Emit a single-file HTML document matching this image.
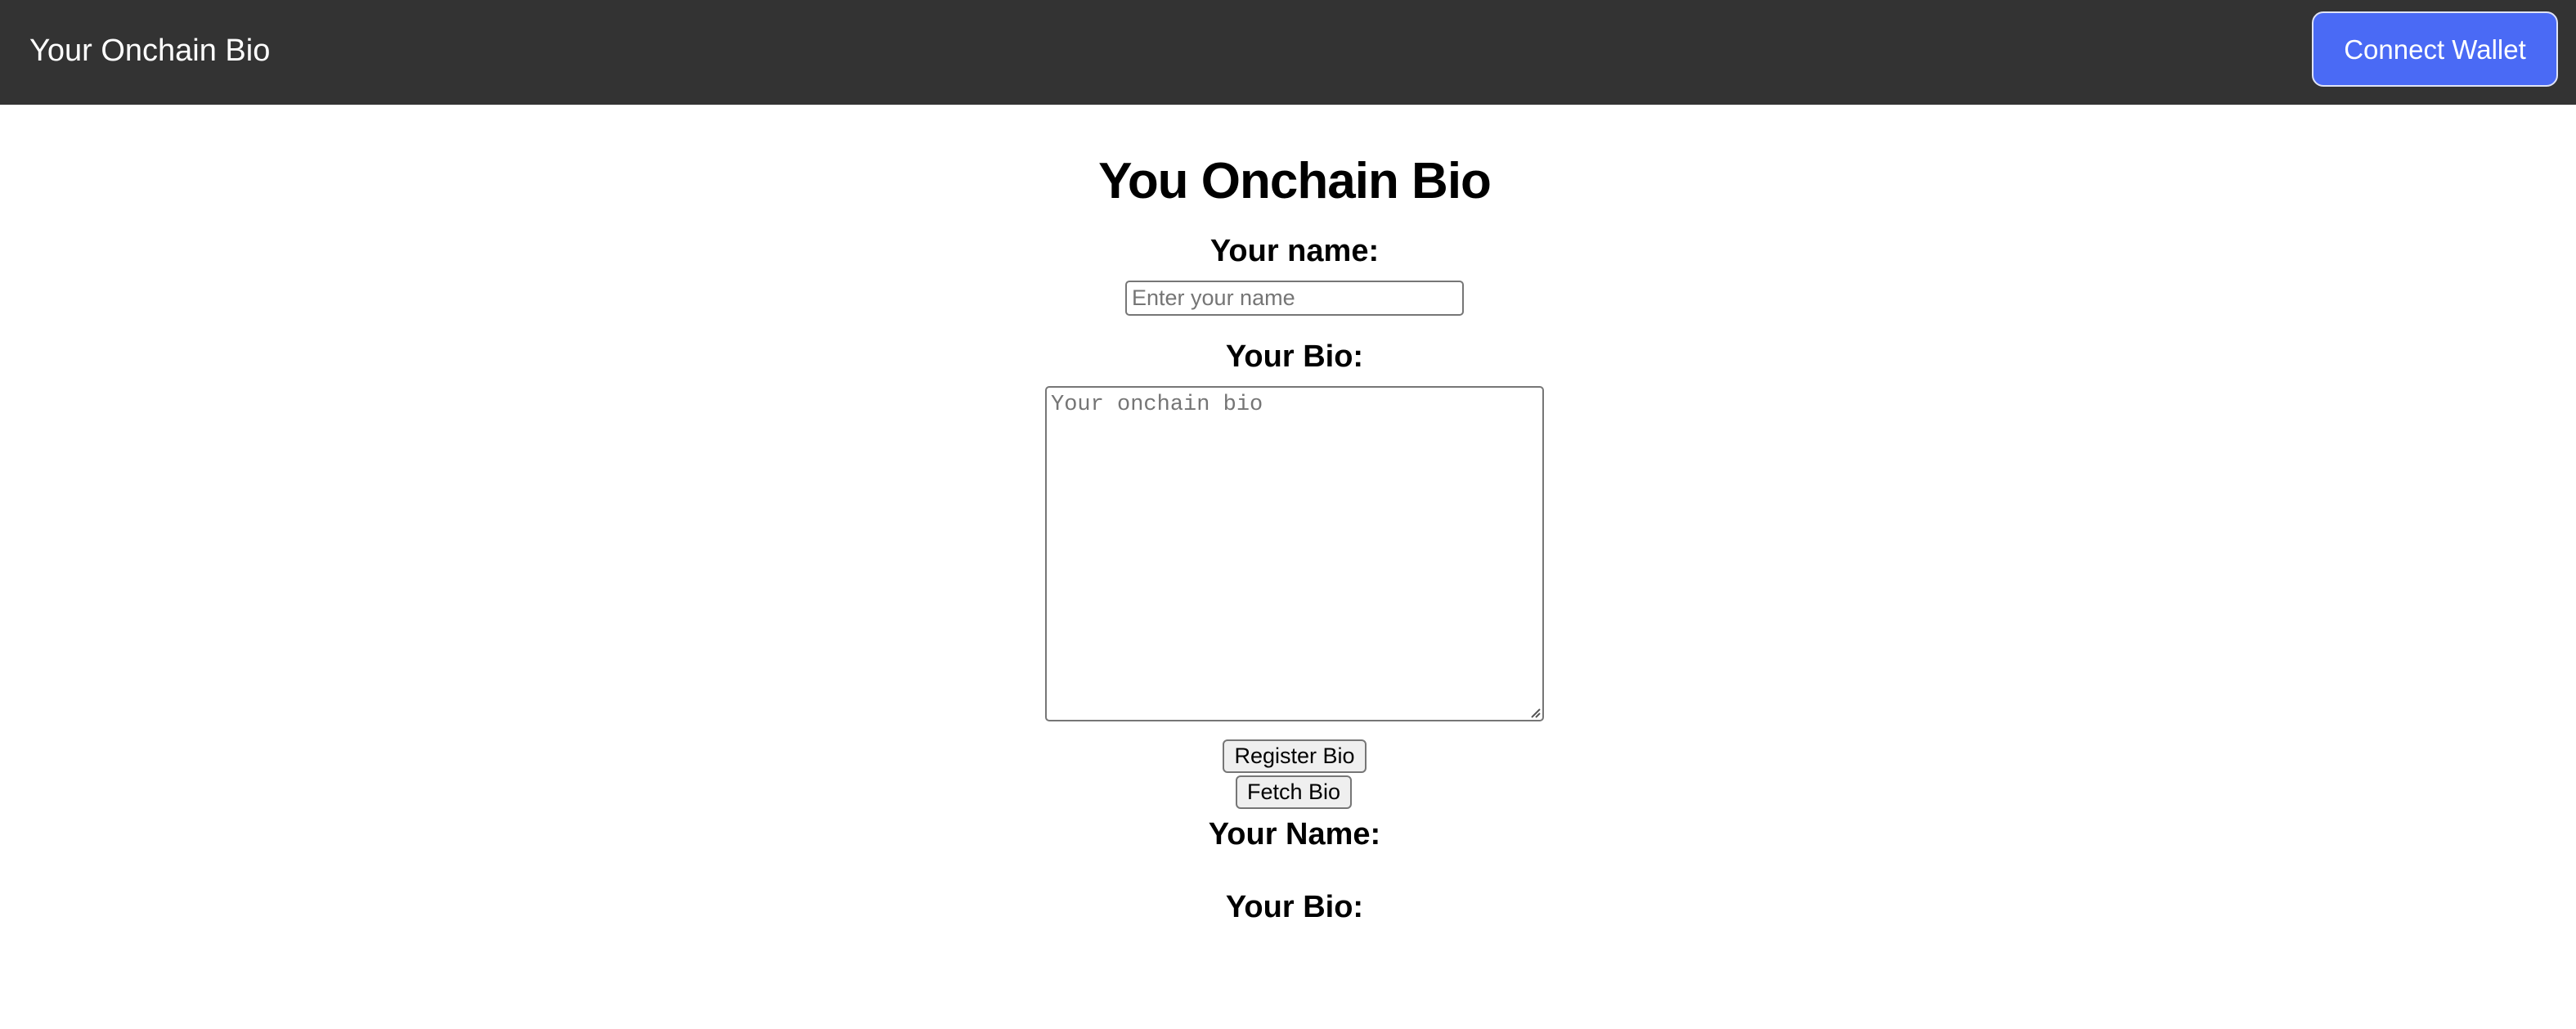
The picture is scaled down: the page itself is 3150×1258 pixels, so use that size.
<!DOCTYPE html>
<html><head><meta charset="utf-8"><style>
*{box-sizing:border-box;margin:0;padding:0}
body{width:3150px;height:1258px;background:#fff;font-family:"Liberation Sans",sans-serif;position:relative;overflow:hidden}
.hdr{position:absolute;left:0;top:0;width:3150px;height:128px;background:#333}
.t{position:absolute;left:8px;width:3150px;text-align:center;color:#000;font-weight:bold;white-space:nowrap}
.box{position:absolute;border:2px solid #767676;border-radius:5px;background:#fff}
.btn{position:absolute;border:2px solid #767676;border-radius:6px;background:#efefef;font-size:27px;text-align:center;color:#000}
</style></head><body>
<div class="hdr"></div>
<div style="position:absolute;left:36px;top:39px;font-size:38px;color:#fff;line-height:46px">Your Onchain Bio</div>
<div style="position:absolute;left:2827px;top:14px;width:301px;height:92px;background:#4a6af5;border:2px solid #dfe3f5;border-radius:14px;color:#fff;font-size:33px;line-height:90px;text-align:center">Connect Wallet</div>
<div class="t" style="top:184px;font-size:62px;line-height:76px;letter-spacing:-1px">You Onchain Bio</div>
<div class="t" style="top:283px;font-size:38px;line-height:48px">Your name:</div>
<div class="box" style="left:1376px;top:343px;width:414px;height:43px;font-size:27px;color:#757575;padding-left:6px;line-height:39px">Enter your name</div>
<div class="t" style="top:412px;font-size:38px;line-height:48px">Your Bio:</div>
<div class="box" style="left:1278px;top:472px;width:610px;height:410px;font-family:'Liberation Mono',monospace;font-size:27px;color:#757575;padding:4px 5px;line-height:34px">Your onchain bio
<svg style="position:absolute;right:2px;bottom:2px" width="14" height="14"><path d="M13 3L3 13M13 8L8 13" stroke="#555" stroke-width="2"/></svg></div>
<div class="btn" style="left:1495px;top:904px;width:176px;height:41px;line-height:37px">Register Bio</div>
<div class="btn" style="left:1511px;top:948px;width:142px;height:41px;line-height:37px">Fetch Bio</div>
<div class="t" style="top:996px;font-size:38px;line-height:48px">Your Name:</div>
<div class="t" style="top:1085px;font-size:38px;line-height:48px">Your Bio:</div>
</body></html>
